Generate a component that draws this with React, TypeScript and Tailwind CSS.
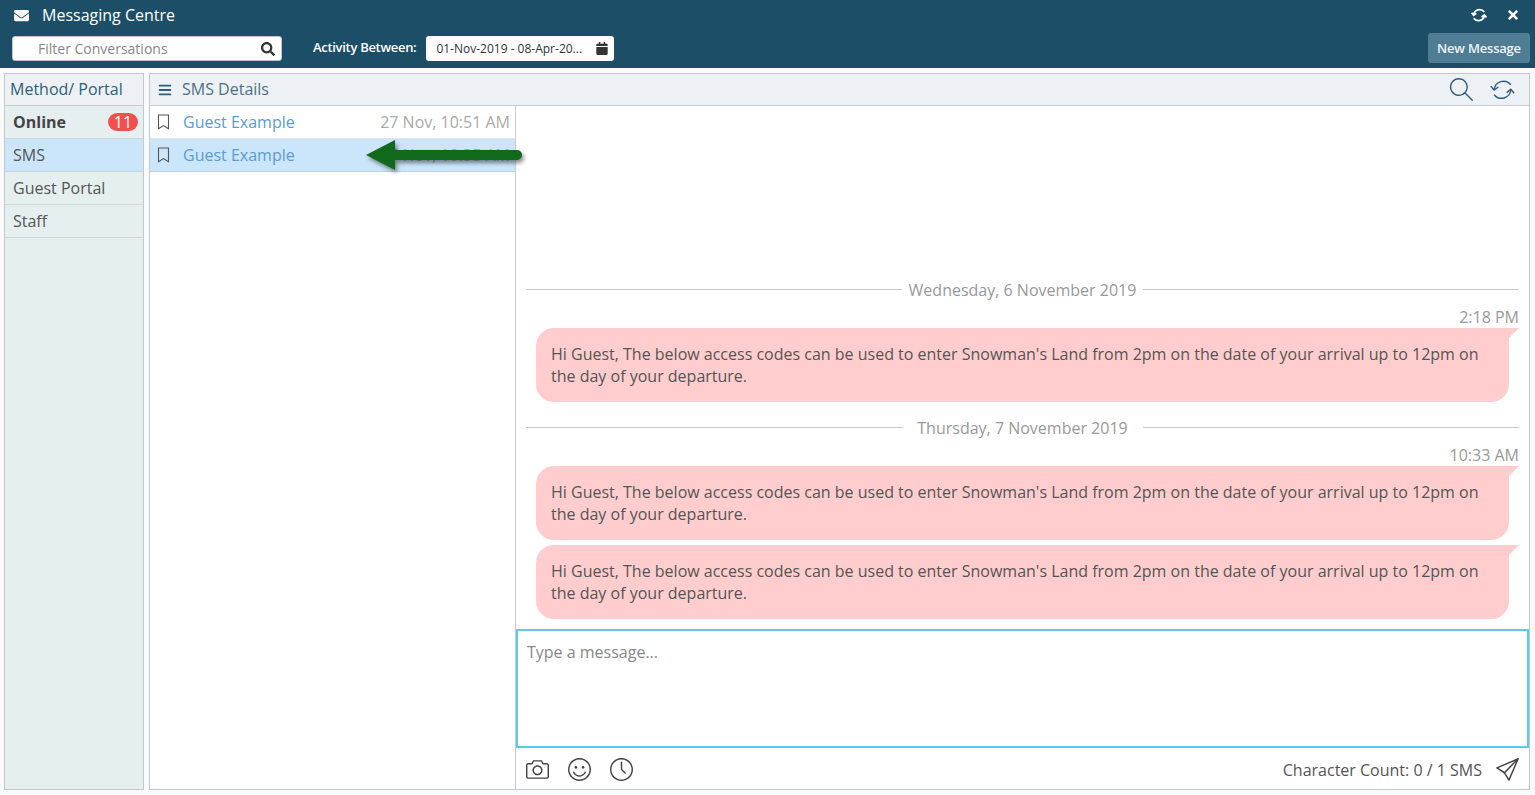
import React from "react";
import { FaEnvelope, FaSearch, FaCalendar, FaTimes, FaBars } from "react-icons/fa";
import { SlMagnifier, SlCamera, SlEmotsmile, SlClock, SlPaperPlane } from "react-icons/sl";

const body =
  "Hi Guest, The below access codes can be used to enter Snowman's Land from 2pm on the date of your arrival up to 12pm on the day of your departure.";

function RefreshIcon({ className, strokeWidth }: { className: string; strokeWidth: number }) {
  return (
    <svg className={className} viewBox="0 0 24 24" fill="none" stroke="currentColor" strokeWidth={strokeWidth}>
      <path d="M4 12 A9 9 0 0 1 20 7.5" />
      <path d="M0.8 8.8 L4 12.6 L8 9.6" />
      <path d="M20 12.5 A9 9 0 0 1 4 17" />
      <path d="M16 15 L20 11.8 L23.2 15.6" />
    </svg>
  );
}

function BookmarkIcon() {
  return (
    <svg width="13" height="16" viewBox="0 0 13 16" fill="none" stroke="#555555" strokeWidth="1.1">
      <path d="M1.5 1H11.5V14.8L6.5 11.6L1.5 14.8Z" />
    </svg>
  );
}

function Divider({ label, labelWidth }: { label: string; labelWidth: string }) {
  return (
    <div className="flex items-center h-6 text-[16px] text-[#999999]">
      <div className="flex-1 h-px bg-[#c8c8c8]" />
      <div className={`text-center pt-[2px] ${labelWidth}`}>{label}</div>
      <div className="flex-1 h-px bg-[#c8c8c8]" />
    </div>
  );
}

function Bubble() {
  return (
    <div className="relative ml-[10px] mr-[10px] rounded-[18px] rounded-tr-none bg-[#ffcdcd] pl-[15px] pr-[24px] py-[15px] text-[16px] leading-[22px] text-[#555555]">
      {body}
      <svg className="absolute left-full top-0" width="10" height="10" viewBox="0 0 10 10">
        <path d="M0 0H10L0 10Z" fill="#ffcdcd" />
      </svg>
    </div>
  );
}

function Thread({ time, children }: { time: string; children: React.ReactNode }) {
  return (
    <div className="flex flex-col">
      <div className="h-[27px] pt-[5px] text-right text-[16px] leading-[23px] text-[#999999]">{time}</div>
      <div className="flex flex-col gap-[5px]">{children}</div>
    </div>
  );
}

export default function App() {
  return (
    <div className="flex flex-col h-[795px] w-[1535px] overflow-hidden bg-[#f8fafc] font-['Open_Sans',sans-serif]">
      <header className="h-[68px] shrink-0 bg-[#1c4f67] text-white">
        <div className="flex items-center h-[30px] mb-[3px] pl-[14px] pr-[15px]">
          <FaEnvelope className="w-[15px] h-[15px]" />
          <span className="ml-[13px] text-[16px]">Messaging Centre</span>
          <RefreshIcon className="ml-auto w-[16px] h-[16px]" strokeWidth={2.6} />
          <FaTimes className="ml-[19px] w-[14px] h-[14px]" />
        </div>
        <div className="flex items-center h-[30px] pl-[12px] pr-[5px]">
          <div className="flex items-center mt-px w-[270px] h-[25px] rounded-[3px] bg-white border border-[#c4c4c4] pl-[25px] pr-[6px] text-[14px] text-[#888888]">
            Filter Conversations
            <FaSearch className="ml-auto w-[14px] h-[14px] text-[#333333]" />
          </div>
          <span className="ml-[31px] text-[13px] font-semibold tracking-[-0.3px]">Activity Between:</span>
          <div className="flex items-center mt-px ml-[10px] w-[188px] h-[25px] rounded-[3px] bg-white pl-[10px] pr-[6px] text-[12px] text-[#333333]">
            01-Nov-2019 - 08-Apr-20...
            <FaCalendar className="ml-auto w-[12px] h-[13px] text-[#333333]" />
          </div>
          <div className="flex items-center justify-center ml-auto w-[102px] h-[30px] pt-[1px] rounded-[3px] bg-[#4f7d94] text-[13px] font-semibold tracking-[-0.2px] text-[#f0f4f6]">
            New Message
          </div>
        </div>
      </header>

      <div className="flex flex-1 min-h-0 gap-[5px] pl-[4px] pr-[5px] pt-[5px] pb-[5px]">
        <aside className="flex flex-col w-[140px] shrink-0 border border-[#c3c8cc] bg-[#e6eff0] text-[16px] text-[#555555]">
          <div className="flex items-center h-[32px] shrink-0 border-b border-[#c8cfd2] bg-[#edf1f6] pl-[5px] pb-[2px] text-[#2f5f78]">
            Method/ Portal
          </div>
          <div className="flex items-center h-[33px] shrink-0 border-b border-[#d0d7d9] pl-[8px] pr-[5px]">
            <span className="font-bold text-[#444444]">Online</span>
            <span className="flex items-center justify-center ml-auto w-[30px] h-[18px] rounded-full bg-[#f44f4f] text-white">11</span>
          </div>
          <div className="flex items-center h-[33px] shrink-0 border-b border-[#c5d4de] bg-[#cbe6fb] pl-[8px]">SMS</div>
          <div className="flex items-center h-[33px] shrink-0 border-b border-[#d0d7d9] pl-[8px]">Guest Portal</div>
          <div className="flex items-center h-[33px] shrink-0 border-b border-[#d0d7d9] pl-[8px]">Staff</div>
        </aside>

        <main className="flex flex-col flex-1 min-w-0 border border-[#c3c8cc] bg-white">
          <div className="flex items-center h-[32px] shrink-0 border-b border-[#c8cfd2] bg-[#edf1f6] pl-[8px] pr-[14px] text-[#2f5f78]">
            <FaBars className="w-[14px] h-[14px]" />
            <span className="ml-[10px] pb-[2px] text-[16px] text-[#4f6f80]">SMS Details</span>
            <SlMagnifier className="ml-auto w-[23px] h-[23px]" />
            <RefreshIcon className="ml-[17px] w-[25px] h-[25px]" strokeWidth={1.4} />
          </div>

          <div className="flex flex-1 min-h-0">
            <section className="relative w-[366px] shrink-0 border-r border-[#c8cccf]">
              <div className="flex items-center h-[33px] border-b border-[#e2e5e8] pl-[7px] pr-[5px] text-[16px]">
                <BookmarkIcon />
                <span className="ml-[13px] text-[#5b9bd5]">Guest Example</span>
                <span className="ml-auto text-[#aaaaaa]">27 Nov, 10:51 AM</span>
              </div>
              <div className="flex items-center h-[33px] border-b border-[#bcd3e4] bg-[#cbe6fb] pl-[7px] pr-[5px] text-[16px]">
                <BookmarkIcon />
                <span className="ml-[13px] text-[#5b9bd5]">Guest Example</span>
                <span className="ml-auto text-[#aaaaaa]">27 Nov, 10:35 AM</span>
              </div>
              <svg className="absolute left-[214px] top-[32px] overflow-visible drop-shadow-[2px_3px_2px_rgba(0,0,0,0.45)]" width="162" height="34" viewBox="0 0 162 34">
                <path d="M31 2 L2 17 L31 32 V22 H153 a5 5 0 0 0 0 -10 H31 Z" fill="#11691c" />
              </svg>
            </section>

            <section className="flex flex-col flex-1 min-w-0">
              <div className="flex flex-col justify-end flex-1 min-h-0 px-[10px] pb-[10px]">
                <Divider label="Wednesday, 6 November 2019" labelWidth="w-[241px]" />
                <Thread time="2:18 PM">
                  <Bubble />
                </Thread>
                <div className="h-[13px]" />
                <Divider label="Thursday, 7 November 2019" labelWidth="w-[240px]" />
                <Thread time="10:33 AM">
                  <Bubble />
                  <Bubble />
                </Thread>
              </div>
              <div className="h-[119px] shrink-0 border-2 border-[#5ccbeb] pl-[9px] pr-[10px] py-[9px] text-[16px] leading-[24px] text-[#888888]">
                Type a message...
              </div>
              <div className="flex items-center h-[41px] shrink-0 pt-[2px] pl-[10px] pr-[10px] text-[#444444]">
                <SlCamera className="w-[23px] h-[23px]" />
                <SlEmotsmile className="ml-[19px] w-[23px] h-[23px]" />
                <SlClock className="ml-[19px] w-[23px] h-[23px]" />
                <span className="ml-auto text-[16px] text-[#555555]">Character Count: 0 / 1 SMS</span>
                <SlPaperPlane className="ml-[14px] w-[23px] h-[23px]" />
              </div>
            </section>
          </div>
        </main>
      </div>
    </div>
  );
}
